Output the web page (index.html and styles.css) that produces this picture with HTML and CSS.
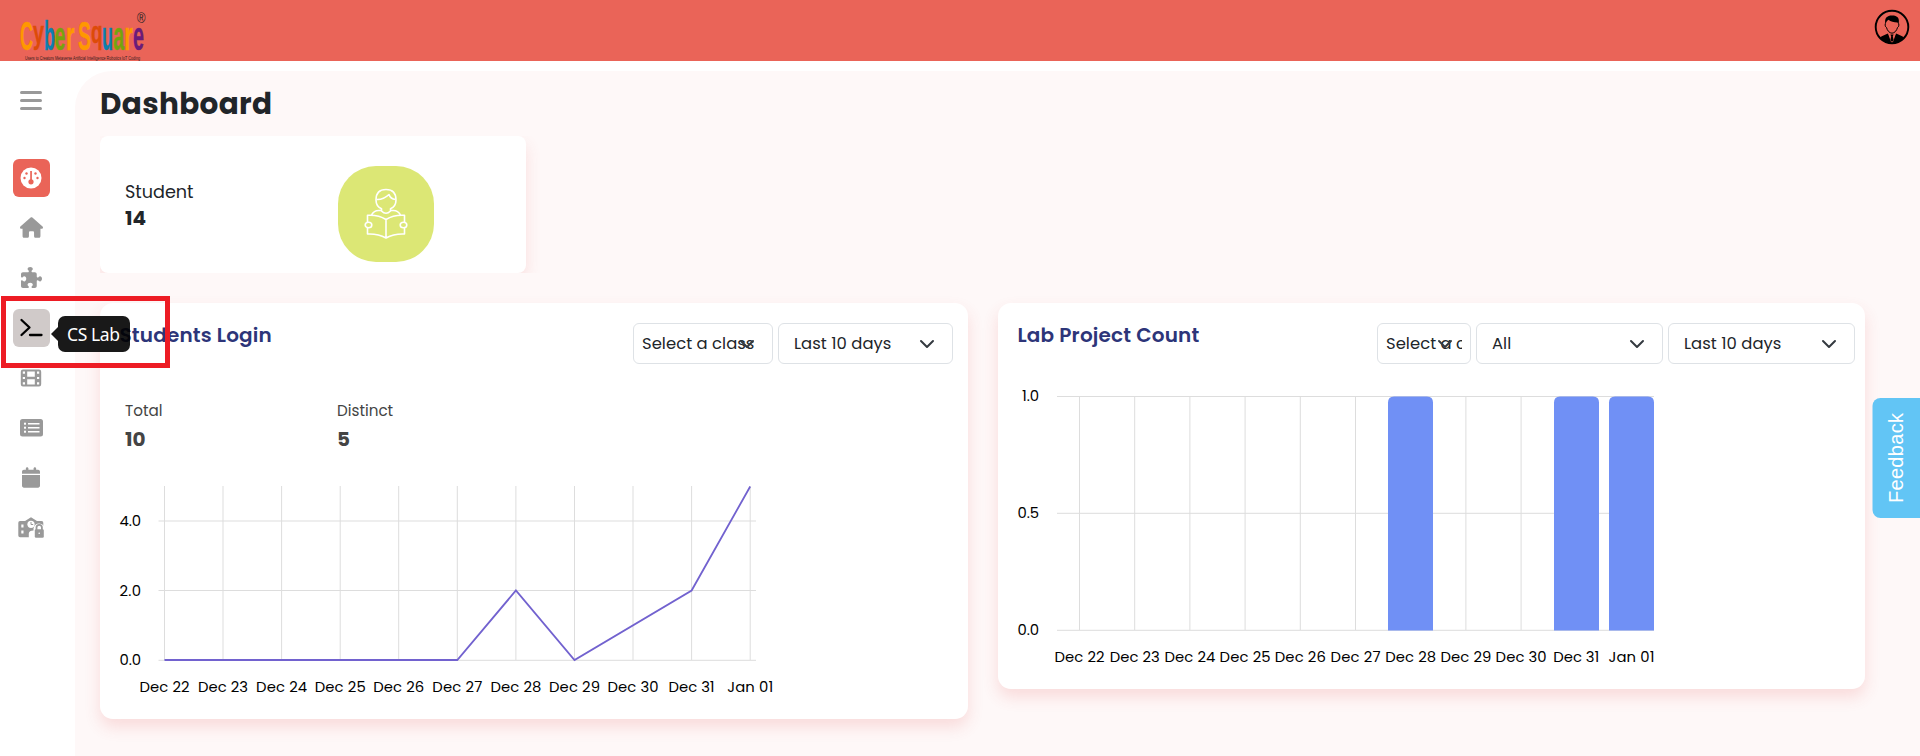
FILE: index.html
```html
<!DOCTYPE html>
<html lang="en">
<head>
<meta charset="utf-8">
<title>Dashboard</title>
<link rel="stylesheet" href="styles.css">
</head>
<body>
<header class="topbar">
  <svg class="logo" width="136" height="61" viewBox="0 0 136 61">
    <g class="logo-name">
      <text class="orange" x="6" y="50" textLength="13" lengthAdjust="spacingAndGlyphs">C</text>
      <text class="rust low" x="19" y="43" textLength="11" lengthAdjust="spacingAndGlyphs">y</text>
      <text class="blue" x="30" y="50" textLength="11" lengthAdjust="spacingAndGlyphs">b</text>
      <text class="green" x="40.500" y="50" textLength="11" lengthAdjust="spacingAndGlyphs">e</text>
      <text class="orange" x="52" y="50" textLength="8.500" lengthAdjust="spacingAndGlyphs">r</text>
      <text class="orange" x="64" y="50" textLength="13" lengthAdjust="spacingAndGlyphs">S</text>
      <text class="rust low" x="77" y="43" textLength="11.500" lengthAdjust="spacingAndGlyphs">q</text>
      <text class="blue" x="88" y="50" textLength="11" lengthAdjust="spacingAndGlyphs">u</text>
      <text class="green" x="99.200" y="50" textLength="11" lengthAdjust="spacingAndGlyphs">a</text>
      <text class="orange" x="110.200" y="50" textLength="8.500" lengthAdjust="spacingAndGlyphs">r</text>
      <text class="purple" x="119" y="50" textLength="11" lengthAdjust="spacingAndGlyphs">e</text>
    </g>
    <text class="logo-reg" x="123" y="23" textLength="8.500" lengthAdjust="spacingAndGlyphs">®</text>
    <text class="logo-tag" x="11" y="59.500" textLength="115" lengthAdjust="spacingAndGlyphs">Users to Creators Metaverse Artificial Intelligence Robotics IoT Coding</text>
  </svg>
  <svg class="avatar" width="36" height="36" viewBox="0 0 36 36">
    <circle cx="18" cy="18" r="16.300" fill="none" stroke="#000" stroke-width="1.900"/>
    <path d="M6 28.500C8 26.500 12 25.500 14 24.500L17.200 33.500H18.800L22 24.500C24 25.500 28 26.500 30 28.500C27 32 23 34.300 18 34.300S9 32 6 28.500Z"/>
    <path d="M14.500 25L18 33.500L21.500 25Z" fill="#ea6458"/>
    <path d="M16.400 25.500H19.600L18.800 27.500L19.600 31L18 33L16.400 31L17.200 27.500Z"/>
    <path d="M11.500 15.500C10 9 13 6.500 18 6.500C23.500 6.500 26 9 24.500 15.500L23.500 13.500C20 13.500 16.500 12.500 14.500 10.800C12.500 12 12.200 13.500 11.500 15.500Z"/>
    <path d="M11.300 14.500C10.800 17 11.600 18 12.500 18.500C13.200 21.500 15.500 24.200 18 24.200S22.800 21.500 23.500 18.500C24.400 18 25.200 17 24.700 14.500" fill="none" stroke="#000" stroke-width="1"/>
  </svg>
</header>
<div class="shell">
  <nav class="sidebar">
    <span class="burger"><i></i><i></i><i></i></span>
    <ul class="menu">
      <li class="item active"><svg width="22" height="22" viewBox="0 0 22 22"><circle cx="11" cy="11" r="10.500" fill="#fff"/><g fill="#ea6458"><circle cx="11" cy="14.800" r="2.600"/><rect x="10.200" y="4" width="1.700" height="10"/><circle cx="6.500" cy="6.500" r="1.200"/><circle cx="15.500" cy="6.500" r="1.200"/><circle cx="4.500" cy="11" r="1.200"/><circle cx="17.500" cy="11" r="1.200"/></g></svg></li>
      <li class="item"><svg width="23" height="21" viewBox="0 0 576 512"><path d="M575.800 255.500c0 18-15 32.100-32 32.100h-32l.7 160.200c0 2.700-.2 5.400-.5 8.100V472c0 22.100-17.900 40-40 40H392c-22.100 0-40-17.900-40-40V384c0-17.700-14.300-32-32-32H256c-17.700 0-32 14.300-32 32v88c0 22.100-17.900 40-40 40H104c-22.100 0-40-17.900-40-40V287.600H32c-18 0-32-14-32-32.100c0-9 3-17 10-24L266.400 8c7-7 15-8 22-8s15 2 21 7L564.800 231.500c8 7 12 15 11 24z"/></svg></li>
      <li class="item"><svg width="21" height="21" viewBox="0 0 512 512"><path d="M192 104.800c0-9.200-5.800-17.300-13.200-22.800C167.200 73.300 160 61.300 160 48c0-26.500 28.700-48 64-48s64 21.500 64 48c0 13.300-7.200 25.300-18.800 34c-7.400 5.500-13.200 13.600-13.200 22.800c0 12.800 10.400 23.200 23.200 23.200H336c26.500 0 48 21.500 48 48v56.800c0 12.800 10.400 23.200 23.200 23.200c9.200 0 17.300-5.800 22.800-13.200c8.700-11.600 20.700-18.800 34-18.800c26.500 0 48 28.700 48 64s-21.500 64-48 64c-13.300 0-25.300-7.200-34-18.800c-5.500-7.400-13.600-13.200-22.800-13.200c-12.800 0-23.200 10.400-23.200 23.200V464c0 26.500-21.500 48-48 48H279.200c-12.800 0-23.200-10.400-23.200-23.200c0-9.200 5.800-17.300 13.200-22.800c11.600-8.700 18.800-20.700 18.800-34c0-26.500-28.700-48-64-48s-64 21.500-64 48c0 13.300 7.200 25.300 18.800 34c7.400 5.500 13.200 13.600 13.200 22.800c0 12.800-10.400 23.200-23.200 23.200H48c-26.500 0-48-21.500-48-48V343.200C0 330.400 10.400 320 23.200 320c9.200 0 17.300 5.800 22.800 13.200C54.700 344.800 66.700 352 80 352c26.500 0 48-28.700 48-64s-21.500-64-48-64c-13.300 0-25.300 7.200-34 18.800C40.500 250.200 32.400 256 23.200 256C10.400 256 0 245.600 0 232.800V176c0-26.500 21.500-48 48-48H168.800c12.800 0 23.200-10.400 23.200-23.200z"/></svg></li>
      <li class="item hovered"><svg width="24" height="20" viewBox="0 0 24 20"><path d="M2.500 2L10.500 9.500L2.500 17M11 17H22.500" fill="none" stroke="#000" stroke-width="2.300" stroke-linecap="round" stroke-linejoin="round"/></svg><span class="tooltip">CS Lab</span><span class="marker"></span></li>
      <li class="item"><svg width="22" height="18" viewBox="0 0 22 18"><path fill-rule="evenodd" d="M3 .5H19A2.200 2.200 0 0 1 21.200 2.700V15.300A2.200 2.200 0 0 1 19 17.500H3A2.200 2.200 0 0 1 .8 15.300V2.700A2.200 2.200 0 0 1 3 .5ZM7.200 2.500V7.800H14.800V2.500ZM7.200 10.200V15.500H14.800V10.200ZM2.800 2.600V4.800H5V2.600ZM2.800 7.900V10.100H5V7.900ZM2.800 13.200V15.400H5V13.200ZM17 2.600V4.800H19.200V2.600ZM17 7.900V10.100H19.200V7.900ZM17 13.200V15.400H19.200V13.200Z"/></svg></li>
      <li class="item"><svg width="23" height="18" viewBox="0 0 23 18"><rect width="23" height="17.500" rx="2.500"/><g fill="#fff"><rect x="4" y="3.700" width="2" height="2"/><rect x="4" y="7.700" width="2" height="2"/><rect x="4" y="11.700" width="2" height="2"/><rect x="8" y="4" width="11.500" height="1.500"/><rect x="8" y="8" width="11.500" height="1.500"/><rect x="8" y="12" width="11.500" height="1.500"/></g></svg></li>
      <li class="item"><svg width="18" height="21" viewBox="0 0 448 512"><path d="M96 32V64H48C21.500 64 0 85.500 0 112v48H448V112c0-26.500-21.500-48-48-48H352V32c0-17.700-14.300-32-32-32s-32 14.300-32 32V64H160V32c0-17.700-14.300-32-32-32S96 14.300 96 32zM448 192H0V464c0 26.500 21.500 48 48 48H400c26.500 0 48-21.500 48-48V192z"/></svg></li>
      <li class="item"><svg width="26" height="21" viewBox="0 0 26 21"><path d="M2 4H7L13 .3L19 4H23.500A1.800 1.800 0 0 1 25.300 6V20.300H2A1.700 1.700 0 0 1 .3 18.600V5.700A1.700 1.700 0 0 1 2 4Z"/><g fill="#fff"><circle cx="13" cy="7.300" r="3.600"/><rect x="3.300" y="7.500" width="2.200" height="3"/><rect x="3.300" y="13.500" width="2.200" height="3"/><path d="M10.800 21V16.500Q11 13.500 15.500 13.500V11.500Q16.500 6.500 21.200 6.500Q24.500 6.500 26 9V21Z"/></g><path d="M13 5V7.500H15.200" fill="none" stroke="#999" stroke-width="1"/><rect x="16.800" y="12.300" width="9" height="8.500" rx="1.300"/><path d="M18.500 13V10.500A2.700 2.700 0 0 1 23.900 10.500V13" fill="none" stroke="#999" stroke-width="1.800"/><circle cx="21.200" cy="16.300" r=".8" fill="#fff"/></svg></li>
    </ul>
  </nav>
  <main class="content">
    <h1 class="page-title">Dashboard</h1>
    <div class="summary-row">
      <section class="summary">
        <div><div class="summary-label">Student</div><div class="number">14</div></div>
        <div class="summary-icon">
          <svg width="44" height="52" viewBox="0 0 44 52" fill="none" stroke="#fff" stroke-width="1.600" stroke-linejoin="round">
            <path d="M12 12C12 5 16 1.500 22 1.500S32 5 32 12C32 16 29.500 19.500 26.500 20.700V23Q22 27.500 17.500 23V20.700C14.500 19.500 12 16 12 12Z"/>
            <path d="M12.500 11.500Q19 12 25 6.500Q26.500 11 31.500 11.500"/>
            <path d="M7.500 27Q10 22.500 14.500 22.500H17.500M26.500 22.500H29.500Q34 22.500 36.500 27"/>
            <path d="M3.500 34V27.300Q14 26.500 22 31.500Q30 26.500 40.500 27.300V34M3.500 40V46Q14 45.500 22 50Q30 45.500 40.500 46V40M22 31.500V50"/>
            <ellipse cx="4.500" cy="37" rx="3.300" ry="2.800"/><ellipse cx="39.500" cy="37" rx="3.300" ry="2.800"/>
          </svg>
        </div>
      </section>
    </div>
    <div class="panels">
      <section class="panel">
        <div class="panel-head">
          <h2 class="panel-title">Students Login</h2>
          <div class="filters">
            <div class="select tight w140"><span>Select a class</span><svg class="chev" width="16" height="16" viewBox="0 0 16 16"><path d="M2 5l6 6 6-6"/></svg></div>
            <div class="select w175"><span>Last 10 days</span><svg class="chev" width="16" height="16" viewBox="0 0 16 16"><path d="M2 5l6 6 6-6"/></svg></div>
          </div>
        </div>
        <div class="stats">
          <div class="stat"><div class="stat-label">Total</div><div class="number">10</div></div>
          <div class="stat"><div class="stat-label">Distinct</div><div class="number">5</div></div>
        </div>
        <svg class="chart" width="868" height="241" viewBox="100 478 868 241">
          <path class="grid" d="M158.500 521H756M158.500 590.500H756M158.500 660.300H756M164.500 486V660M223 486V660M281.600 486V660M340.200 486V660M398.700 486V660M457.300 486V660M515.900 486V660M574.500 486V660M633 486V660M691.600 486V660M750.200 486V660"/>
          <path class="line" d="M164.500 660H457.300L515.900 590.500L574.500 660L691.600 590.500L750.200 486.500"/>
          <g class="ylab"><text x="119.500" y="526" textLength="21.500">4.0</text><text x="119.500" y="595.500" textLength="21.500">2.0</text><text x="119.500" y="665" textLength="21.500">0.0</text></g>
          <g class="xlab"><text x="164.500" y="692" textLength="50">Dec 22</text><text x="223" y="692" textLength="50">Dec 23</text><text x="281.600" y="692" textLength="51">Dec 24</text><text x="340.200" y="692" textLength="51">Dec 25</text><text x="398.700" y="692" textLength="51">Dec 26</text><text x="457.300" y="692" textLength="50">Dec 27</text><text x="515.900" y="692" textLength="51">Dec 28</text><text x="574.500" y="692" textLength="51">Dec 29</text><text x="633" y="692" textLength="51">Dec 30</text><text x="691.600" y="692" textLength="46">Dec 31</text><text x="750.200" y="692" textLength="46">Jan 01</text></g>
        </svg>
      </section>
      <section class="panel">
        <div class="panel-head">
          <h2 class="panel-title">Lab Project Count</h2>
          <div class="filters last">
            <div class="select tight w94"><span>Select a class</span><svg class="chev" width="16" height="16" viewBox="0 0 16 16"><path d="M2 5l6 6 6-6"/></svg></div>
            <div class="select w187"><span>All</span><svg class="chev" width="16" height="16" viewBox="0 0 16 16"><path d="M2 5l6 6 6-6"/></svg></div>
            <div class="select w187"><span>Last 10 days</span><svg class="chev" width="16" height="16" viewBox="0 0 16 16"><path d="M2 5l6 6 6-6"/></svg></div>
          </div>
        </div>
        <svg class="chart" width="867" height="309" viewBox="998 380 867 309">
          <path class="grid" d="M1057 396.500H1654M1057 513.300H1654M1057 630.300H1654M1079.500 396V630M1134.700 396V630M1189.900 396V630M1245.100 396V630M1300.300 396V630M1355.500 396V630M1410.700 396V630M1465.900 396V630M1521.100 396V630M1576.300 396V630M1631.500 396V630"/>
          <g class="bars"><path d="M1388 630.500V402.500Q1388 396.500 1394 396.500H1427Q1433 396.500 1433 402.500V630.500Z"/><path d="M1554 630.500V402.500Q1554 396.500 1560 396.500H1593Q1599 396.500 1599 402.500V630.500Z"/><path d="M1609 630.500V402.500Q1609 396.500 1615 396.500H1648Q1654 396.500 1654 402.500V630.500Z"/></g>
          <g class="ylab"><text x="1022" y="401" textLength="17">1.0</text><text x="1017.500" y="518" textLength="21.500">0.5</text><text x="1017.500" y="635" textLength="21.500">0.0</text></g>
          <g class="xlab"><text x="1079.500" y="662" textLength="50">Dec 22</text><text x="1134.700" y="662" textLength="50">Dec 23</text><text x="1189.900" y="662" textLength="51">Dec 24</text><text x="1245.100" y="662" textLength="51">Dec 25</text><text x="1300.300" y="662" textLength="51">Dec 26</text><text x="1355.500" y="662" textLength="50">Dec 27</text><text x="1410.700" y="662" textLength="51">Dec 28</text><text x="1465.900" y="662" textLength="51">Dec 29</text><text x="1521.100" y="662" textLength="51">Dec 30</text><text x="1576.300" y="662" textLength="46">Dec 31</text><text x="1631.500" y="662" textLength="46">Jan 01</text></g>
        </svg>
      </section>
    </div>
  </main>
</div>
<div class="feedback">Feedback</div>
</body>
</html>
```

FILE: styles.css
```css
* { box-sizing: border-box; }
body { margin: 0; height: 756px; overflow: hidden; background: #fff; color: #212529; font-family: Poppins, Inter, sans-serif; }
h1, h2, ul { margin: 0; padding: 0; }
svg { display: block; flex: none; }

.topbar { height: 61px; padding: 0 10px 0 14px; display: flex; justify-content: space-between; background: #ea6458; }
.avatar { margin-top: 9px; }
.logo-name { font: bold 40px "Liberation Sans", sans-serif; }
.logo-name .low { font-size: 32px; }
.orange { fill: #ff9800; stroke: #ff9800; stroke-width: .4; }
.rust { fill: #dd4b08; stroke: #dd4b08; stroke-width: .4; }
.blue { fill: #0d7fae; stroke: #0d7fae; stroke-width: .4; }
.green { fill: #76a30c; stroke: #76a30c; stroke-width: .4; }
.purple { fill: #6a1b7a; stroke: #6a1b7a; stroke-width: .4; }
.logo-reg { font: 14px "Liberation Sans", sans-serif; fill: #222; }
.logo-tag { font: 6px "Liberation Sans", sans-serif; fill: #33201e; }

.shell { display: flex; height: 695px; }
.sidebar { position: relative; z-index: 2; width: 75px; flex: none; padding: 30px 0 0 13px; }
.burger { display: flex; flex-direction: column; gap: 5px; width: 22px; margin-left: 7px; }
.burger i { height: 3px; border-radius: 2px; background: #999; }
.menu { list-style: none; margin-top: 49px; display: flex; flex-direction: column; gap: 12px; }
.item { position: relative; width: 37px; height: 38px; padding: 0 1px 1px 0; border-radius: 6px; display: flex; align-items: center; justify-content: center; fill: #999; }
.item.active { background: #ea6458; }
.item.hovered { background: #d0cac9; }
.tooltip { position: absolute; left: 45px; top: 7px; width: 72px; height: 36px; border-radius: 7px; background: rgba(0, 0, 0, .9); color: #fff; font: 17.500px/36px "Noto Sans", sans-serif; letter-spacing: -.4px; padding-left: 9px; white-space: nowrap; }
.tooltip::before { content: ""; position: absolute; left: -7px; top: 11px; border: 7px solid transparent; border-left: 0; border-right-color: rgba(0, 0, 0, .9); }
.marker { position: absolute; left: -12px; top: -13px; width: 169px; height: 72px; border: 5px solid #ed1c24; }

.content { flex: 1; min-width: 0; margin-top: 10px; padding: 0 0 0 25px; background: #fef8f8; border-top-left-radius: 37px; }
.page-title { height: 65px; padding-top: 14px; font-size: 29.500px; line-height: 38px; font-weight: 700; letter-spacing: .35px; }
.summary-row { height: 137px; overflow: hidden; }
.summary { width: 426px; height: 137px; padding: 0 92px 0 25px; border-radius: 8px; background: #fff; box-shadow: 0 8px 16px rgba(225, 70, 70, .14); display: flex; justify-content: space-between; }
.summary-label { margin-top: 43px; font-size: 17.600px; line-height: 26px; }
.number { font-size: 20px; line-height: 28px; font-weight: 700; }
.summary .number { line-height: 26px; }
.summary-icon { width: 96px; height: 96px; margin-top: 30px; border-radius: 38px; background: #dce775; display: flex; align-items: center; justify-content: center; }

.panels { display: flex; align-items: flex-start; gap: 30px; margin-top: 30px; }
.panel { border-radius: 13px; background: #fff; box-shadow: 0 8px 16px rgba(225, 70, 70, .16); }
.panel-head { display: flex; justify-content: space-between; height: 77px; padding: 20px 15px 0 19.500px; }
.panel-title { font-size: 20px; line-height: 24px; font-weight: 600; color: #2d3579; white-space: nowrap; letter-spacing: .18px; }
.filters { display: flex; gap: 5px; }
.filters.last { margin-right: -5px; }
.select { position: relative; height: 41px; padding: 0 8px 0 15px; border: 1px solid #dee2e6; border-radius: 6px; font-size: 16.400px; line-height: 40px; }
.select span { display: block; height: 39px; overflow: hidden; white-space: nowrap; letter-spacing: .04px; }
.select.tight { padding-left: 8px; }
.w140 { width: 140px; }
.w175 { width: 175px; }
.w94 { width: 94px; }
.w187 { width: 187px; }
.chev { position: absolute; right: 17px; top: 12px; fill: none; stroke: #343a40; stroke-width: 2; stroke-linecap: round; stroke-linejoin: round; }

.stats { display: flex; height: 98px; padding: 17px 25px 0; color: #444; }
.stat { width: 212px; }
.stat-label { font-size: 15.200px; line-height: 27px; }
.stat .number { line-height: 30px; }
.chart text { font-size: 14.800px; fill: #000; }
.xlab { text-anchor: middle; }
.grid { fill: none; stroke: #ddd; }
.line { fill: none; stroke: #7262cf; stroke-width: 1.800; }
.bars { fill: #7090f5; }

.feedback { position: absolute; right: 0; top: 398px; width: 47.500px; height: 120px; border-radius: 0 8px 8px 0; background: #62c5f5; color: #fff; font: 20px/49px "Liberation Sans", sans-serif; letter-spacing: .3px; text-align: center; writing-mode: vertical-lr; transform: rotate(180deg); padding-left: 0; }
```
